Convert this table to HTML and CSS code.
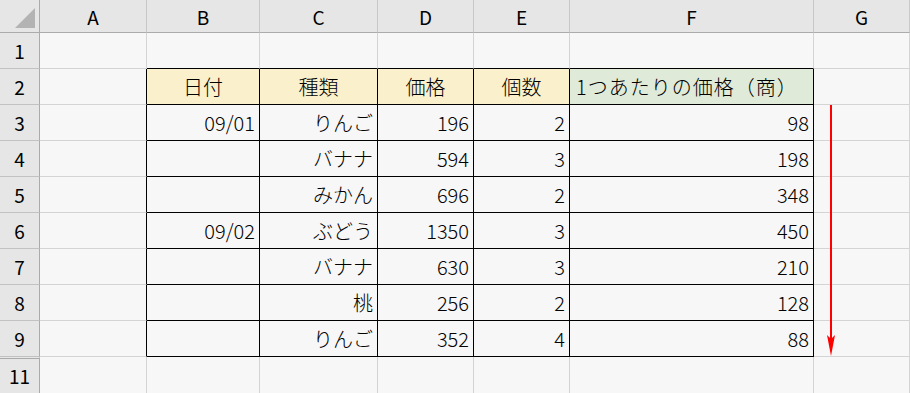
FILE: index.html
```html
<!DOCTYPE html>
<html>
<head lang="ja">
    <meta charset="UTF-8">
    <title>商の計算</title>
    <link rel="stylesheet" href="styles.css">
</head>
<body>
<div class="sheet">
    <!-- 列見出し -->
    <div class="corner">
        <svg width="40" height="33" viewBox="0 0 40 33"><polygon points="15,28 35,28 35,8" fill="#b3b3b3"/></svg>
    </div>
    <div class="col-head">A</div>
    <div class="col-head">B</div>
    <div class="col-head">C</div>
    <div class="col-head">D</div>
    <div class="col-head">E</div>
    <div class="col-head">F</div>
    <div class="col-head">G</div>

    <!-- 1 -->
    <div class="row-head">1</div>
    <div class="cell"></div>
    <div class="cell bd-b"></div>
    <div class="cell bd-b"></div>
    <div class="cell bd-b"></div>
    <div class="cell bd-b"></div>
    <div class="cell bd-b"></div>
    <div class="cell"></div>

    <!-- 2 見出し -->
    <div class="row-head">2</div>
    <div class="cell bd-r"></div>
    <div class="cell box hd">日付</div>
    <div class="cell box hd">種類</div>
    <div class="cell box hd">価格</div>
    <div class="cell box hd">個数</div>
    <div class="cell box hd-green">1つあたりの価格（商）</div>
    <div class="cell"></div>

    <!-- 3 -->
    <div class="row-head">3</div>
    <div class="cell bd-r"></div>
    <div class="cell box num">09/01</div>
    <div class="cell box num">りんご</div>
    <div class="cell box num">196</div>
    <div class="cell box num">2</div>
    <div class="cell box num">98</div>
    <div class="cell"></div>

    <!-- 4 -->
    <div class="row-head">4</div>
    <div class="cell bd-r"></div>
    <div class="cell box num"></div>
    <div class="cell box num">バナナ</div>
    <div class="cell box num">594</div>
    <div class="cell box num">3</div>
    <div class="cell box num">198</div>
    <div class="cell"></div>

    <!-- 5 -->
    <div class="row-head">5</div>
    <div class="cell bd-r"></div>
    <div class="cell box num"></div>
    <div class="cell box num">みかん</div>
    <div class="cell box num">696</div>
    <div class="cell box num">2</div>
    <div class="cell box num">348</div>
    <div class="cell"></div>

    <!-- 6 -->
    <div class="row-head">6</div>
    <div class="cell bd-r"></div>
    <div class="cell box num">09/02</div>
    <div class="cell box num">ぶどう</div>
    <div class="cell box num">1350</div>
    <div class="cell box num">3</div>
    <div class="cell box num">450</div>
    <div class="cell"></div>

    <!-- 7 -->
    <div class="row-head">7</div>
    <div class="cell bd-r"></div>
    <div class="cell box num"></div>
    <div class="cell box num">バナナ</div>
    <div class="cell box num">630</div>
    <div class="cell box num">3</div>
    <div class="cell box num">210</div>
    <div class="cell"></div>

    <!-- 8 -->
    <div class="row-head">8</div>
    <div class="cell bd-r"></div>
    <div class="cell box num"></div>
    <div class="cell box num">桃</div>
    <div class="cell box num">256</div>
    <div class="cell box num">2</div>
    <div class="cell box num">128</div>
    <div class="cell"></div>

    <!-- 9 -->
    <div class="row-head">9</div>
    <div class="cell bd-r"></div>
    <div class="cell box num"></div>
    <div class="cell box num">りんご</div>
    <div class="cell box num">352</div>
    <div class="cell box num">4</div>
    <div class="cell box num">88</div>
    <div class="cell"></div>

    <!-- 10 は非表示 -->
    <div class="row-head hidden-above">11</div>
    <div class="cell"></div>
    <div class="cell"></div>
    <div class="cell"></div>
    <div class="cell"></div>
    <div class="cell"></div>
    <div class="cell"></div>
    <div class="cell"></div>

    <!-- 下向きの矢印 -->
    <svg class="arrow" width="12" height="256" viewBox="0 0 12 256">
        <line x1="6" y1="0" x2="6" y2="236" stroke="#ff0000" stroke-width="2"/>
        <polygon points="2,230 6,234 10,230 6,251" fill="#ff0000"/>
    </svg>
</div>
</body>
</html>
```

FILE: styles.css
```css
html, body {
    margin: 0;
    padding: 0;
    background: #f7f7f7;
}

.sheet {
    position: relative;
    display: grid;
    grid-template-columns: 40px 107px 113px 118px 96px 96px 244px 96px;
    grid-template-rows: 33px repeat(9, 36px) 37px;
    width: 910px;
    height: 393px;
    overflow: hidden;
    font-family: "Noto Sans CJK JP", "Noto Sans", sans-serif;
    font-size: 20px;
    font-weight: 300;
    color: #000;
}

.sheet > div {
    box-sizing: border-box;
}

/* 見出し */
.corner {
    background: #e6e6e6;
    border-right: 1px solid #ababab;
    border-bottom: 1px solid #ababab;
}
.corner svg {
    display: block;
}

.col-head {
    display: flex;
    align-items: center;
    justify-content: center;
    background: #e6e6e6;
    border-right: 1px solid #c8c8c8;
    border-bottom: 1px solid #ababab;
    font-size: 19px;
    font-weight: 400;
}

.row-head {
    display: flex;
    align-items: center;
    justify-content: center;
    background: #e6e6e6;
    border-right: 1px solid #ababab;
    border-bottom: 1px solid #c2c2c2;
    font-size: 19px;
    font-weight: 400;
}
.row-head.hidden-above {
    border-top: 1px solid #e6e6e6;
    box-shadow: inset 0 1px 0 #ababab;
}

/* セル */
.cell {
    display: flex;
    align-items: center;
    padding: 0 4px;
    background: #f7f7f7;
    border-right: 1px solid #d4d4d4;
    border-bottom: 1px solid #d4d4d4;
    white-space: nowrap;
}

.num {
    justify-content: flex-end;
}

.box {
    border-right-color: #000;
    border-bottom-color: #000;
}
.bd-r {
    border-right-color: #000;
}
.bd-b {
    border-bottom-color: #000;
}

.hd {
    justify-content: center;
    background: #faf0cb;
}
.hd-green {
    padding-left: 6px;
    letter-spacing: 1px;
    background: #e0ead8;
}

.arrow {
    position: absolute;
    left: 825px;
    top: 105px;
}
```
